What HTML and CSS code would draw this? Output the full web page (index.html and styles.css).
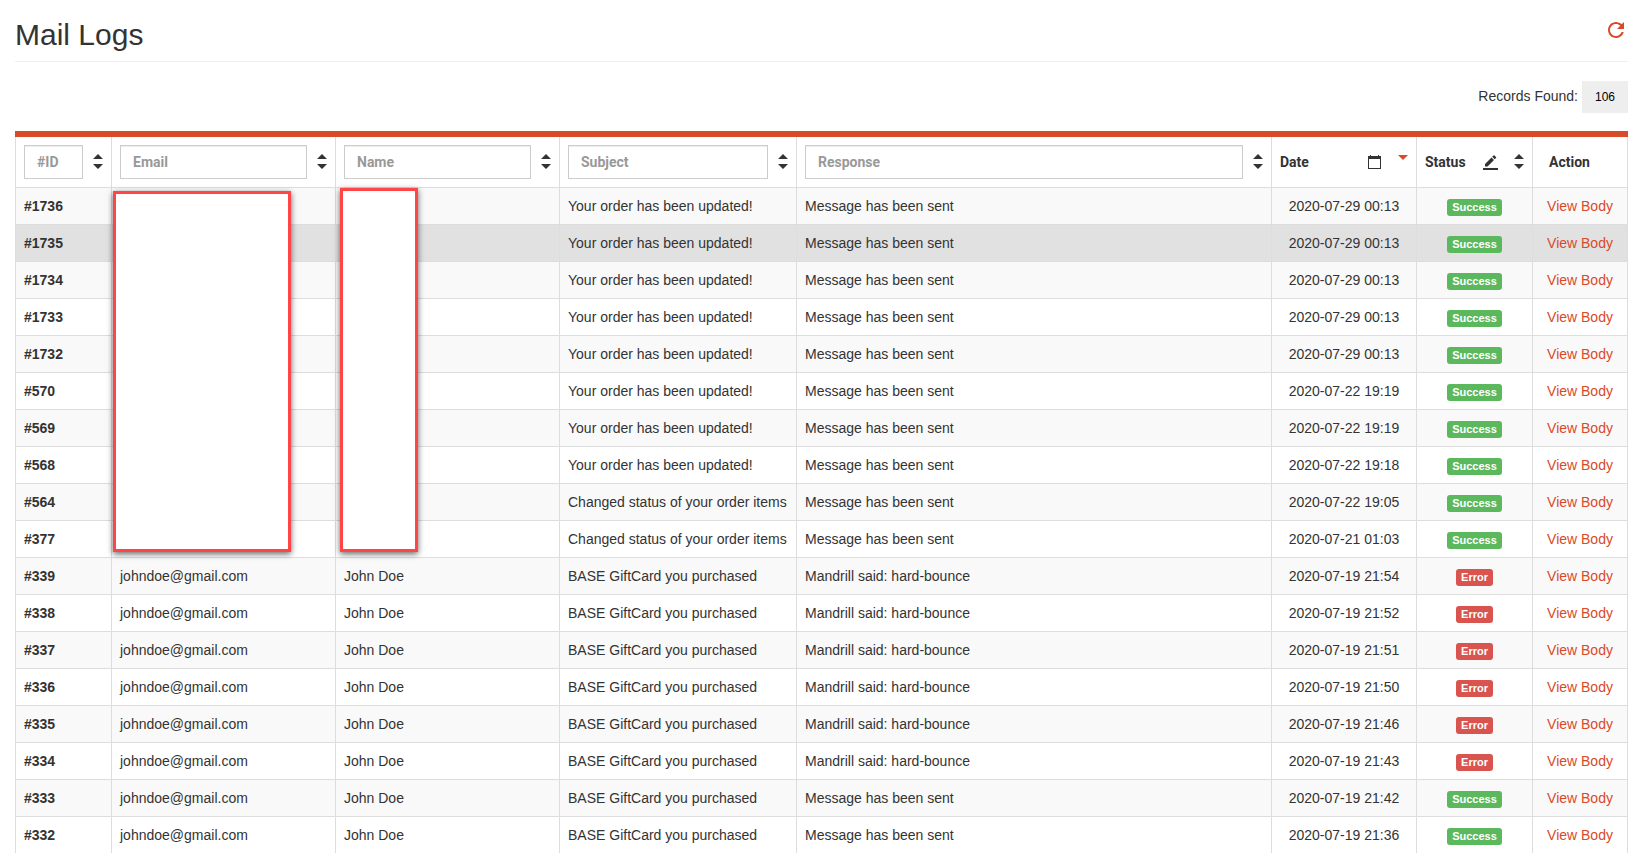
FILE: index.html
```html
<!DOCTYPE html>
<html lang="en">
<head>
<meta charset="utf-8">
<title>Mail Logs</title>
<link rel="stylesheet" href="styles.css">
</head>
<body>
<svg class="sprite" aria-hidden="true">
  <symbol id="sort" viewBox="0 0 10 16"><path d="M0 5 5 0l5 5zM0 10h10l-5 5z"/></symbol>
  <symbol id="sort-desc" viewBox="0 0 10 16"><path d="M0 1h10L5 6z"/></symbol>
</svg>
<main class="page">
  <header class="page-header">
    <h1 class="title">Mail Logs</h1>
    <button class="icon-btn refresh" type="button" aria-label="Refresh">
      <svg width="24" height="24" viewBox="0 0 24 24"><path d="M17.65 6.35C16.2 4.9 14.21 4 12 4c-4.42 0-7.99 3.58-7.99 8s3.57 8 7.99 8c3.73 0 6.84-2.55 7.73-6h-2.08c-.82 2.33-3.04 4-5.65 4-3.31 0-6-2.69-6-6s2.69-6 6-6c1.66 0 3.14.69 4.22 1.78L13 11h7V4l-2.35 2.35z"/></svg>
    </button>
  </header>
  <div class="records">
    <span>Records Found:</span>
    <span class="count">106</span>
  </div>
  <div class="table-wrap">
    <table class="logs">
      <colgroup>
        <col class="col-id"><col class="col-person"><col class="col-person"><col class="col-subject"><col><col class="col-date"><col class="col-status"><col class="col-action">
      </colgroup>
      <thead>
        <tr>
          <th><div class="filter"><input class="field" type="text" placeholder="#ID" aria-label="#ID"><button class="icon-btn" type="button" aria-label="Sort by ID"><svg width="10" height="16"><use href="#sort"/></svg></button></div></th>
          <th><div class="filter"><input class="field" type="text" placeholder="Email" aria-label="Email"><button class="icon-btn" type="button" aria-label="Sort by email"><svg width="10" height="16"><use href="#sort"/></svg></button></div></th>
          <th><div class="filter"><input class="field" type="text" placeholder="Name" aria-label="Name"><button class="icon-btn" type="button" aria-label="Sort by name"><svg width="10" height="16"><use href="#sort"/></svg></button></div></th>
          <th><div class="filter"><input class="field" type="text" placeholder="Subject" aria-label="Subject"><button class="icon-btn" type="button" aria-label="Sort by subject"><svg width="10" height="16"><use href="#sort"/></svg></button></div></th>
          <th><div class="filter"><input class="field" type="text" placeholder="Response" aria-label="Response"><button class="icon-btn" type="button" aria-label="Sort by response"><svg width="10" height="16"><use href="#sort"/></svg></button></div></th>
          <th><div class="filter"><span class="label">Date</span><button class="icon-btn date-pick" type="button" aria-label="Filter by date"><svg width="13" height="14" viewBox="0 0 13 14"><path d="M2 0h1v1h7V0h1v1h2v13H0V1h2zM1 4v9h11V4z"/></svg></button><button class="icon-btn active" type="button" aria-label="Sort by date"><svg width="10" height="16"><use href="#sort-desc"/></svg></button></div></th>
          <th><div class="filter status-head"><span class="label">Status</span><button class="icon-btn" type="button" aria-label="Filter by status"><svg width="15" height="15" viewBox="0 0 15 15"><path d="M0 13h15v2H0zM2 9 8.500 2.500l2.500 2.500L4.500 11.500H2zM9.200 1.800 10.500.500q.500-.500 1 0l1.500 1.500q.500.500 0 1l-1.300 1.300z"/></svg></button><button class="icon-btn" type="button" aria-label="Sort by status"><svg width="10" height="16"><use href="#sort"/></svg></button></div></th>
          <th class="action-head">Action</th>
        </tr>
      </thead>
      <tbody>
        <tr><th scope="row">#1736</th><td></td><td></td><td>Your order has been updated!</td><td>Message has been sent</td><td>2020-07-29 00:13</td><td><span class="badge success">Success</span></td><td><a href="#">View Body</a></td></tr>
        <tr class="hovered"><th scope="row">#1735</th><td></td><td></td><td>Your order has been updated!</td><td>Message has been sent</td><td>2020-07-29 00:13</td><td><span class="badge success">Success</span></td><td><a href="#">View Body</a></td></tr>
        <tr><th scope="row">#1734</th><td></td><td></td><td>Your order has been updated!</td><td>Message has been sent</td><td>2020-07-29 00:13</td><td><span class="badge success">Success</span></td><td><a href="#">View Body</a></td></tr>
        <tr><th scope="row">#1733</th><td></td><td></td><td>Your order has been updated!</td><td>Message has been sent</td><td>2020-07-29 00:13</td><td><span class="badge success">Success</span></td><td><a href="#">View Body</a></td></tr>
        <tr><th scope="row">#1732</th><td></td><td></td><td>Your order has been updated!</td><td>Message has been sent</td><td>2020-07-29 00:13</td><td><span class="badge success">Success</span></td><td><a href="#">View Body</a></td></tr>
        <tr><th scope="row">#570</th><td></td><td></td><td>Your order has been updated!</td><td>Message has been sent</td><td>2020-07-22 19:19</td><td><span class="badge success">Success</span></td><td><a href="#">View Body</a></td></tr>
        <tr><th scope="row">#569</th><td></td><td></td><td>Your order has been updated!</td><td>Message has been sent</td><td>2020-07-22 19:19</td><td><span class="badge success">Success</span></td><td><a href="#">View Body</a></td></tr>
        <tr><th scope="row">#568</th><td></td><td></td><td>Your order has been updated!</td><td>Message has been sent</td><td>2020-07-22 19:18</td><td><span class="badge success">Success</span></td><td><a href="#">View Body</a></td></tr>
        <tr><th scope="row">#564</th><td></td><td></td><td>Changed status of your order items</td><td>Message has been sent</td><td>2020-07-22 19:05</td><td><span class="badge success">Success</span></td><td><a href="#">View Body</a></td></tr>
        <tr><th scope="row">#377</th><td></td><td></td><td>Changed status of your order items</td><td>Message has been sent</td><td>2020-07-21 01:03</td><td><span class="badge success">Success</span></td><td><a href="#">View Body</a></td></tr>
        <tr><th scope="row">#339</th><td>johndoe@gmail.com</td><td>John Doe</td><td>BASE GiftCard you purchased</td><td>Mandrill said: hard-bounce</td><td>2020-07-19 21:54</td><td><span class="badge error">Error</span></td><td><a href="#">View Body</a></td></tr>
        <tr><th scope="row">#338</th><td>johndoe@gmail.com</td><td>John Doe</td><td>BASE GiftCard you purchased</td><td>Mandrill said: hard-bounce</td><td>2020-07-19 21:52</td><td><span class="badge error">Error</span></td><td><a href="#">View Body</a></td></tr>
        <tr><th scope="row">#337</th><td>johndoe@gmail.com</td><td>John Doe</td><td>BASE GiftCard you purchased</td><td>Mandrill said: hard-bounce</td><td>2020-07-19 21:51</td><td><span class="badge error">Error</span></td><td><a href="#">View Body</a></td></tr>
        <tr><th scope="row">#336</th><td>johndoe@gmail.com</td><td>John Doe</td><td>BASE GiftCard you purchased</td><td>Mandrill said: hard-bounce</td><td>2020-07-19 21:50</td><td><span class="badge error">Error</span></td><td><a href="#">View Body</a></td></tr>
        <tr><th scope="row">#335</th><td>johndoe@gmail.com</td><td>John Doe</td><td>BASE GiftCard you purchased</td><td>Mandrill said: hard-bounce</td><td>2020-07-19 21:46</td><td><span class="badge error">Error</span></td><td><a href="#">View Body</a></td></tr>
        <tr><th scope="row">#334</th><td>johndoe@gmail.com</td><td>John Doe</td><td>BASE GiftCard you purchased</td><td>Mandrill said: hard-bounce</td><td>2020-07-19 21:43</td><td><span class="badge error">Error</span></td><td><a href="#">View Body</a></td></tr>
        <tr><th scope="row">#333</th><td>johndoe@gmail.com</td><td>John Doe</td><td>BASE GiftCard you purchased</td><td>Message has been sent</td><td>2020-07-19 21:42</td><td><span class="badge success">Success</span></td><td><a href="#">View Body</a></td></tr>
        <tr><th scope="row">#332</th><td>johndoe@gmail.com</td><td>John Doe</td><td>BASE GiftCard you purchased</td><td>Message has been sent</td><td>2020-07-19 21:36</td><td><span class="badge success">Success</span></td><td><a href="#">View Body</a></td></tr>
      </tbody>
    </table>
    <div class="mask mask-email"></div>
    <div class="mask mask-name"></div>
  </div>
</main>
</body>
</html>
```

FILE: styles.css
```css
*, *::before, *::after { box-sizing: border-box; }

body {
  margin: 0;
  background: #fff;
  color: #333;
  font: 14px/20px "Liberation Sans", Arial, sans-serif;
}

.sprite { display: none; }

.page {
  height: 100vh;
  overflow: hidden;
  padding: 18px 3px 0 15px;
}

.page-header {
  display: flex;
  align-items: flex-start;
  justify-content: space-between;
  padding-bottom: 10px;
  border-bottom: 1px solid #eee;
}

.title {
  margin: 0;
  font-size: 30px;
  font-weight: 400;
  line-height: 33px;
}

.icon-btn {
  display: block;
  flex: none;
  padding: 0;
  border: 0;
  background: none;
  color: #333;
  cursor: pointer;
}

.icon-btn svg { display: block; fill: currentColor; }
.icon-btn.refresh, .icon-btn.active { color: #d94a28; }

.records {
  display: flex;
  align-items: baseline;
  justify-content: flex-end;
  gap: 4px;
  margin: 19px 0 18px;
}

.count {
  padding: 6px 13px;
  background: #eee;
  color: #000;
  font-size: 12px;
}

.table-wrap { position: relative; border-top: 6px solid #d94a28; }

.logs {
  width: 100%;
  table-layout: fixed;
  border-collapse: separate;
  border-spacing: 0;
  border-left: 1px solid #ddd;
}

.col-id { width: 96px; }
.col-person { width: 224px; }
.col-subject { width: 237px; }
.col-date { width: 145px; }
.col-status { width: 116px; }
.col-action { width: 95px; }

.logs th, .logs td {
  padding: 8px;
  border-right: 1px solid #ddd;
  border-bottom: 1px solid #ddd;
  text-align: left;
  white-space: nowrap;
}

.logs thead th { font-family: Roboto, sans-serif; }
.logs thead .action-head { padding-left: 16px; }
.logs tbody tr:nth-child(odd) { background: #f9f9f9; }
.logs tbody tr.hovered { background: #e1e1e1; }
.logs td:nth-child(n+6) { text-align: center; }
.logs a { color: #d94a28; text-decoration: none; }

.filter { display: flex; align-items: center; gap: 10px; }
.label { flex: 1; }
.date-pick { margin-right: 7px; }
.status-head { gap: 16px; }

.field {
  flex: 1;
  min-width: 0;
  height: 34px;
  padding: 6px 12px;
  border: 1px solid #ccc;
  border-radius: 0;
  background: #fff;
  box-shadow: inset 0 1px 1px rgba(0, 0, 0, .075);
  color: #555;
  font: bold 14px/20px Roboto, sans-serif;
}

.field::placeholder { color: #999; opacity: 1; }

.badge {
  display: inline-block;
  padding: 3px 5px;
  border-radius: 3px;
  color: #fff;
  font-size: 11px;
  font-weight: 700;
  line-height: 11px;
  vertical-align: middle;
}

.success { background: #5cb85c; }
.error { background: #d9534f; }

.mask {
  position: absolute;
  border: 3px solid #ff4545;
  background: #fff;
  box-shadow: 0 2px 6px rgba(0, 0, 0, .6);
}

.mask-email { top: 54px; left: 98px; width: 178px; height: 361px; }
.mask-name { top: 51px; left: 325px; width: 78px; height: 364px; }
```
